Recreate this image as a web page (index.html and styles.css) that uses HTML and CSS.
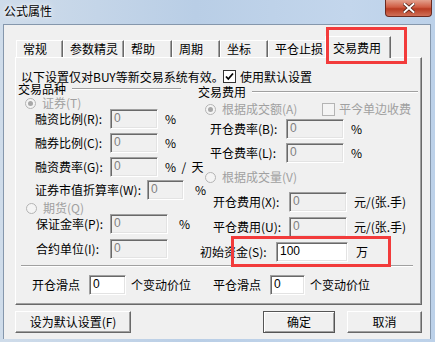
FILE: index.html
```html
<!DOCTYPE html>
<html lang="zh-CN">
<head>
    <meta charset="UTF-8">
    <title>公式属性</title>
    <link rel="stylesheet" href="styles.css">
</head>
<body>
<div class="frame">
    <div class="titlebar">
        <span class="title">公式属性</span>
        <div class="close">
            <svg width="12" height="10" viewBox="0 0 12 10">
                <path d="M1.5 1 L10.5 9 M10.5 1 L1.5 9" stroke="#4a1a10" stroke-width="3.4" stroke-linecap="square"/>
                <path d="M1.5 1 L10.5 9 M10.5 1 L1.5 9" stroke="#fff" stroke-width="2" stroke-linecap="square"/>
            </svg>
        </div>
    </div>

    <div class="client">
        <div class="tabs">
            <div class="tab w47">常规</div>
            <div class="tab w61">参数精灵</div>
            <div class="tab w48">帮助</div>
            <div class="tab w48">周期</div>
            <div class="tab w48">坐标</div>
            <div class="tab w59">平仓止损</div>
            <div class="tab active">交易费用</div>
        </div>

        <div class="panel">
            <div class="note">
                <span class="note-text">以下设置仅对BUY等新交易系统有效。</span>
                <span class="check on">
                    <svg width="11" height="11" viewBox="0 0 11 11"><path d="M2 5.5 L4.3 8 L9 2.5" fill="none" stroke="#000" stroke-width="1.8"/></svg>
                </span>
                <span>使用默认设置</span>
            </div>

            <div class="cols">
                <!-- 交易品种 -->
                <div class="col col-left">
                    <div class="legend lg-left"><span>交易品种</span><i class="line"></i></div>
                    <div class="opt opt-stock"><span class="radio on"></span><span class="dim">证券(T)</span></div>
                    <div class="field ml19"><label class="lw75">融资比例(R):</label><div class="box w48">0</div><span class="unit">%</span></div>
                    <div class="field ml19 mt4"><label class="lw75">融券比例(C):</label><div class="box w48">0</div><span class="unit">%</span></div>
                    <div class="field ml19 mt4"><label class="lw75">融资费率(G):</label><div class="box w48">0</div><span class="unit">%&nbsp;&nbsp;/&nbsp;&nbsp;天</span></div>
                    <div class="field ml19 mt3"><label class="lw112">证券市值折算率(W):</label><div class="box w37">0</div><span class="unit u11">%</span></div>
                    <div class="opt opt-fut"><span class="radio"></span><span class="dim">期货(Q)</span></div>
                    <div class="field ml20"><label class="lw74">保证金率(P):</label><div class="box w58">0</div><span class="unit u11">%</span></div>
                    <div class="field ml20 mt5"><label class="lw74">合约单位(I):</label><div class="box w58">0</div></div>
                </div>

                <!-- 交易费用 -->
                <div class="col col-right">
                    <div class="legend lg-right"><span>交易费用</span><i class="line"></i></div>
                    <div class="opt opt-amount">
                        <span class="radio on"></span><span class="dim amt-text">根据成交额(A)</span>
                        <span class="check off"></span><span class="dim">平今单边收费</span>
                    </div>
                    <div class="field ml12 mt4"><label class="lw76">开仓费率(B):</label><div class="box w58">0</div><span class="unit">%</span></div>
                    <div class="field ml12 mt4"><label class="lw76">平仓费率(L):</label><div class="box w58">0</div><span class="unit">%</span></div>
                    <div class="opt opt-vol"><span class="radio"></span><span class="dim">根据成交量(V)</span></div>
                    <div class="field ml15 mt9"><label class="lw76">开仓费用(X):</label><div class="box w58">0</div><span class="unit">元/(张.手)</span></div>
                    <div class="field ml15 mt5"><label class="lw76">平仓费用(U):</label><div class="box w58">0</div><span class="unit">元/(张.手)</span></div>
                    <div class="field ml2 mt5"><label class="lw76">初始资金(S):</label><div class="box on w72">100</div><span class="unit u8">万</span></div>
                </div>
            </div>

            <div class="sep"></div>

            <div class="slip">
                <span class="sl-label">开仓滑点</span><div class="box on w37">0</div><span class="sl-text">个变动价位</span>
                <span class="sl-label">平仓滑点</span><div class="box on w35">0</div><span class="sl-text">个变动价位</span>
            </div>
        </div>

        <div class="buttons">
            <div class="btn b-default">设为默认设置(F)</div>
            <div class="btn b-ok">确定</div>
            <div class="btn b-cancel">取消</div>
        </div>
    </div>

    <div class="mark mark-tab"></div>
    <div class="mark mark-fund"></div>
</div>
</body>
</html>
```

FILE: styles.css
```css
* {
    box-sizing: border-box;
}

body {
    margin: 0;
    font-family: "Noto Sans CJK SC", "Liberation Sans", sans-serif;
    font-size: 12px;
    line-height: 14px;
    color: #000;
}

.frame {
    position: relative;
    width: 435px;
    height: 342px;
    background: linear-gradient(to right, #cfdcea, #b9cee6 45%, #c3d6ec 80%, #bcd1e9);
    overflow: hidden;
}

.titlebar {
    display: flex;
    height: 24px;
}

.title {
    margin: 4px 0 0 4px;
    line-height: 14px;
    font-size: 12px;
    text-shadow: 0 0 6px #fff, 0 0 3px #fff;
}

.close {
    margin-left: auto;
    margin-right: 3px;
    width: 47px;
    height: 17px;
    border: 1px solid #6b2a20;
    border-top: none;
    border-radius: 0 0 4px 4px;
    background: linear-gradient(#e3a08d, #cf5c43 45%, #b83b22 55%, #d07058);
    display: flex;
    align-items: center;
    justify-content: center;
}

/* client area */
.client {
    margin: 0 4px 0 3px;
    height: 315px;
    background: #f0f0f0;
    border: 1px solid #8597ac;
    border-bottom: none;
    padding-left: 11px;
}

.tabs {
    display: flex;
    align-items: flex-end;
    height: 21px;
    margin-top: 11px;
    padding-left: 1px;
    position: relative;
    z-index: 1;
}

.tab {
    height: 17px;
    padding-left: 6px;
    line-height: 15px;
    background: #f0f0f0;
    border-top: 1px solid #fff;
    border-left: 1px solid #fff;
    border-right: 1px solid #696969;
    box-shadow: inset -1px 0 #a0a0a0;
    white-space: nowrap;
}

.w47 { width: 47px; }
.w61 { width: 61px; }
.w48 { width: 48px; }
.w59 { width: 59px; }

.tab.active {
    width: 66px;
    height: 22px;
    margin-left: -2px;
    margin-bottom: -1px;
    padding: 3px 0 0 7px;
    line-height: 15px;
}

/* tab page */
.panel {
    width: 407px;
    height: 248px;
    border: 1px solid;
    border-color: #fff #696969 #696969 #fff;
    box-shadow: inset -1px -1px #a0a0a0;
}

.note {
    display: flex;
    align-items: center;
    height: 13px;
    margin-top: 12px;
    padding-left: 5px;
    line-height: 12px;
    white-space: nowrap;
}

.note-text {
    width: 202px;
}

.check {
    flex: none;
    width: 13px;
    height: 13px;
    margin-right: 4px;
    display: flex;
    align-items: center;
    justify-content: center;
}

.check.on {
    background: #fff;
    border: 1px solid #333;
}

.check.off {
    background: #f4f4f4;
    border: 1px solid #b4b4b4;
}

.cols {
    display: flex;
    height: 177px;
}

.col {
    display: flex;
    flex-direction: column;
}

.col-left {
    width: 182px;
}

.col-right {
    width: 222px;
}

.legend {
    display: flex;
    align-items: center;
    height: 12px;
    line-height: 12px;
    white-space: nowrap;
}

.legend .line {
    height: 2px;
    border-top: 1px solid #a0a0a0;
    border-bottom: 1px solid #fff;
}

.lg-left {
    margin: 0 0 0 2px;
}

.lg-left .line {
    margin-left: 6px;
    width: 109px;
}

.lg-right {
    margin-top: 3px;
}

.lg-right .line {
    flex: 1;
    margin: 0 2px 0 6px;
}

.opt {
    display: flex;
    align-items: center;
    height: 12px;
    line-height: 12px;
    white-space: nowrap;
}

.radio {
    flex: none;
    width: 11px;
    height: 11px;
    margin-right: 6px;
    border: 1px solid #b4b4b4;
    border-radius: 50%;
    background: #f4f4f4;
    position: relative;
}

.radio.on::after {
    content: "";
    position: absolute;
    left: 2px;
    top: 2px;
    width: 5px;
    height: 5px;
    border-radius: 50%;
    background: #a8a8a8;
}

.dim {
    color: #a0a0a0;
}

.opt-stock { margin: 2px 0 0 9px; }
.opt-fut { margin: 2px 0 0 10px; }
.opt-amount { margin: 5px 0 0 7px; }
.amt-text { width: 100px; }
.opt-vol { margin: 8px 0 0 7px; }

.field {
    display: flex;
    align-items: center;
    height: 20px;
    white-space: nowrap;
}

.field label {
    flex: none;
}

.ml2 { margin-left: 2px; }
.ml12 { margin-left: 12px; }
.ml15 { margin-left: 15px; }
.ml19 { margin-left: 19px; }
.ml20 { margin-left: 20px; }
.mt3 { margin-top: 3px; }
.mt4 { margin-top: 4px; }
.mt5 { margin-top: 5px; }
.mt9 { margin-top: 9px; }

.lw74 { width: 74px; }
.lw75 { width: 75px; }
.lw76 { width: 76px; }
.lw112 { width: 112px; }

.box {
    flex: none;
    height: 20px;
    padding-left: 3px;
    line-height: 17px;
    border: 1px solid;
    border-color: #a0a0a0 #fff #fff #a0a0a0;
    box-shadow: inset 1px 1px #696969, inset -1px -1px #e3e3e3;
    background: #f0f0f0;
    color: #808080;
    font-family: "Liberation Sans", sans-serif;
}

.box.on {
    background: #fff;
    color: #000;
}

.w35 { width: 35px; }
.w37 { width: 37px; }
.w48 { width: 48px; }
.w58 { width: 58px; }
.w72 { width: 72px; }

.unit {
    margin-left: 7px;
}

.u8 { margin-left: 8px; }
.u11 { margin-left: 11px; }

.sep {
    width: 392px;
    height: 2px;
    margin: 5px 0 0 5px;
    border-top: 1px solid #a0a0a0;
    border-bottom: 1px solid #fff;
}

.slip {
    display: flex;
    align-items: center;
    height: 20px;
    margin: 8px 0 0 16px;
    white-space: nowrap;
}

.sl-label {
    width: 57px;
}

.sl-text {
    width: 82px;
    margin-left: 5px;
}

/* dialog buttons */
.buttons {
    display: flex;
    height: 22px;
    margin-top: 6px;
}

.btn {
    height: 22px;
    line-height: 19px;
    text-align: center;
    background: #f0f0f0;
    border: 1px solid;
    border-color: #fff #696969 #696969 #fff;
    box-shadow: inset -1px -1px #a0a0a0;
    white-space: nowrap;
}

.b-default {
    width: 116px;
}

.b-ok {
    width: 72px;
    margin-left: 132px;
    border-color: #555;
    box-shadow: inset 1px 1px #fff, inset -1px -1px #a0a0a0;
}

.b-cancel {
    width: 75px;
    margin-left: 12px;
}

/* red annotation boxes */
.mark {
    position: absolute;
    border: 3px solid #f23b3b;
    z-index: 5;
}

.mark-tab {
    left: 326px;
    top: 27px;
    width: 81px;
    height: 37px;
}

.mark-fund {
    left: 231px;
    top: 236px;
    width: 160px;
    height: 31px;
}
```
